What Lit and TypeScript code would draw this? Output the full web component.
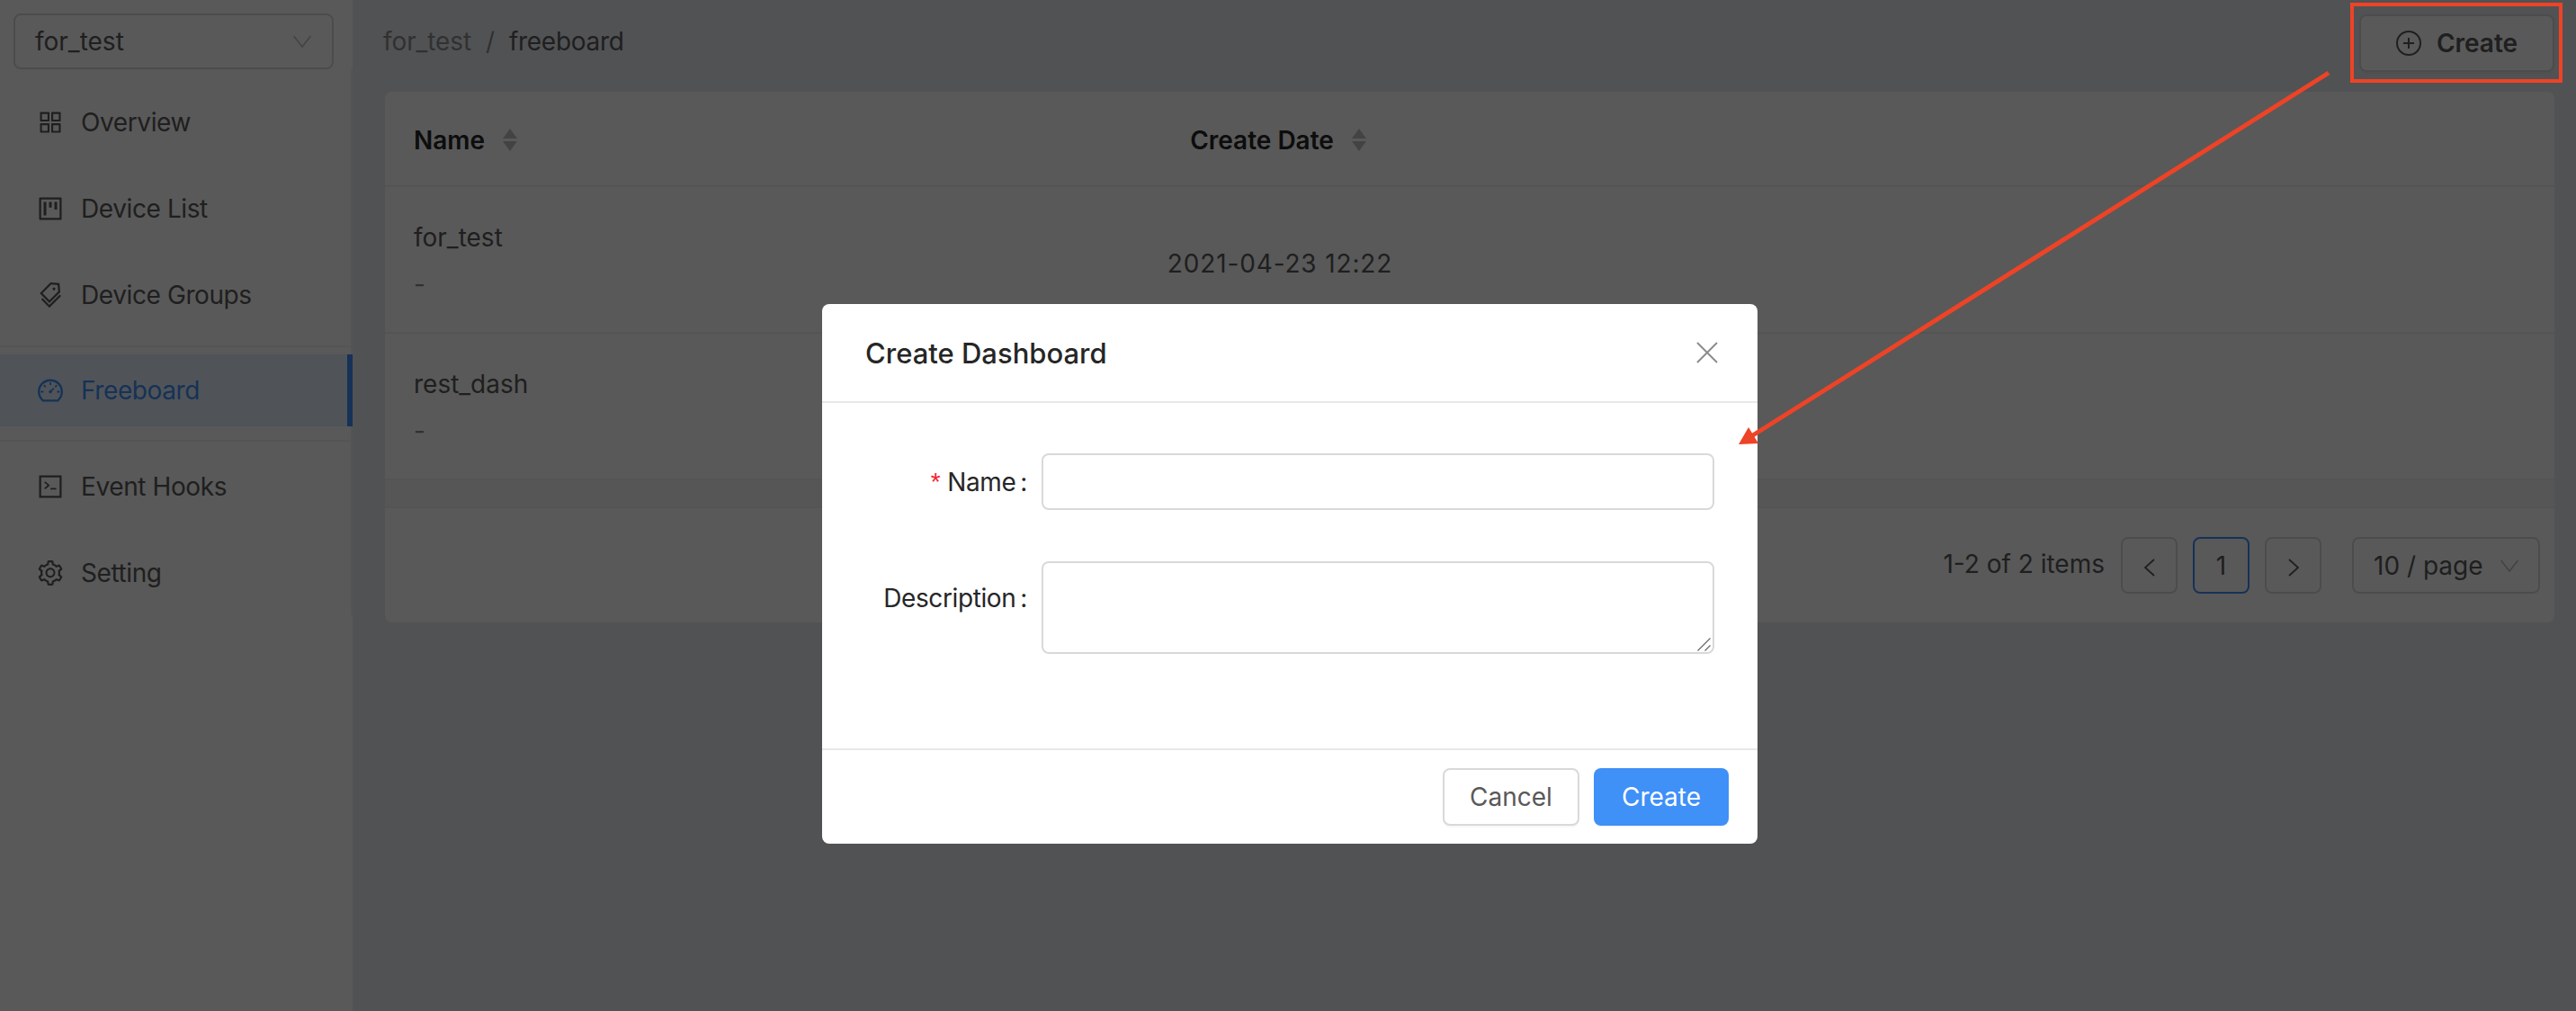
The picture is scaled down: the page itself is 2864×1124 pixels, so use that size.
import { LitElement, html, css, svg } from 'lit';
import { customElement } from 'lit/decorators.js';

const icon = (d: string) => html`<svg class="ico" viewBox="64 64 896 896" fill="currentColor"><path d=${d}></path></svg>`;

const APPSTORE = 'M464 144H160c-8.8 0-16 7.2-16 16v304c0 8.8 7.2 16 16 16h304c8.8 0 16-7.2 16-16V160c0-8.8-7.2-16-16-16zm-52 268H212V212h200v200zm452-268H560c-8.8 0-16 7.2-16 16v304c0 8.8 7.2 16 16 16h304c8.8 0 16-7.2 16-16V160c0-8.8-7.2-16-16-16zm-52 268H612V212h200v200zM464 544H160c-8.8 0-16 7.2-16 16v304c0 8.8 7.2 16 16 16h304c8.8 0 16-7.2 16-16V560c0-8.8-7.2-16-16-16zm-52 268H212V612h200v200zm452-268H560c-8.8 0-16 7.2-16 16v304c0 8.8 7.2 16 16 16h304c8.8 0 16-7.2 16-16V560c0-8.8-7.2-16-16-16zm-52 268H612V612h200v200z';
const PROJECT = 'M280 752h80c4.4 0 8-3.6 8-8V280c0-4.4-3.6-8-8-8h-80c-4.4 0-8 3.6-8 8v464c0 4.4 3.6 8 8 8zm192-280h80c4.4 0 8-3.6 8-8V280c0-4.4-3.6-8-8-8h-80c-4.4 0-8 3.6-8 8v184c0 4.4 3.6 8 8 8zm192 72h80c4.4 0 8-3.6 8-8V280c0-4.4-3.6-8-8-8h-80c-4.4 0-8 3.6-8 8v256c0 4.4 3.6 8 8 8zm216-432H144c-17.7 0-32 14.3-32 32v736c0 17.7 14.3 32 32 32h736c17.7 0 32-14.3 32-32V144c0-17.7-14.3-32-32-32zm-40 728H184V184h656v656z';
const TAGS = 'M483.2 790.3L861.4 412c1.7-1.7 2.5-4 2.3-6.3l-25.5-301.4c-.7-7.8-6.8-13.9-14.6-14.6L522.2 64.3c-2.3-.2-4.7.6-6.3 2.3L137.7 444.8a8.03 8.03 0 000 11.3l334.2 334.2c3.1 3.2 8.2 3.2 11.3 0zm62.6-651.7l224.6 19 19 224.6L477.5 694 233.9 450.5l311.9-311.9zm60.16 186.23a48 48 0 1067.88-67.89 48 48 0 10-67.88 67.89zM889.7 539.8l-39.6-39.5a8.03 8.03 0 00-11.3 0l-362 361.3-237.6-237a8.03 8.03 0 00-11.3 0l-39.6 39.5a8.03 8.03 0 000 11.3l243.2 242.8 39.6 39.5c3.1 3.1 8.2 3.1 11.3 0l407.3-406.6c3.1-3.1 3.1-8.2 0-11.3z';
const DASHBOARD = 'M924.8 385.6a446.7 446.7 0 00-96-142.4 446.7 446.7 0 00-142.4-96C631.1 123.8 572.5 112 512 112s-119.1 11.8-174.4 35.2a446.7 446.7 0 00-142.4 96 446.7 446.7 0 00-96 142.4C75.8 440.9 64 499.5 64 560c0 132.7 58.3 257.7 159.9 343.1l1.7 1.4c5.8 4.8 13.1 7.5 20.6 7.5h531.7c7.5 0 14.8-2.7 20.6-7.5l1.7-1.4C901.7 817.7 960 692.7 960 560c0-60.5-11.8-119.1-35.2-174.4zM761.4 836H262.6A371.12 371.12 0 01140 560c0-99.4 38.7-192.8 109-263 70.3-70.3 163.7-109 263-109 99.4 0 192.8 38.7 263 109 70.3 70.3 109 163.7 109 263 0 105.6-44.5 205.5-122.6 276zM623.5 421.5a8.03 8.03 0 00-11.3 0L527.7 506c-18.7-5-39.4-.2-54.1 14.5a55.95 55.95 0 000 79.2 55.95 55.95 0 0079.2 0 55.87 55.87 0 0014.5-54.1l84.5-84.5c3.1-3.1 3.1-8.2 0-11.3l-28.3-28.3zM490 320h44c4.4 0 8-3.6 8-8v-80c0-4.4-3.6-8-8-8h-44c-4.4 0-8 3.6-8 8v80c0 4.4 3.6 8 8 8zm260 218v44c0 4.4 3.6 8 8 8h80c4.4 0 8-3.6 8-8v-44c0-4.4-3.6-8-8-8h-80c-4.4 0-8 3.6-8 8zm12.7-197.2l-31.1-31.1a8.03 8.03 0 00-11.3 0l-56.6 56.6a8.03 8.03 0 000 11.3l31.1 31.1c3.1 3.1 8.2 3.1 11.3 0l56.6-56.6c3.1-3.1 3.1-8.2 0-11.3zm-458.6-31.1a8.03 8.03 0 00-11.3 0l-31.1 31.1a8.03 8.03 0 000 11.3l56.6 56.6c3.1 3.1 8.2 3.1 11.3 0l31.1-31.1c3.1-3.1 3.1-8.2 0-11.3l-56.6-56.6zM262 530h-80c-4.4 0-8 3.6-8 8v44c0 4.4 3.6 8 8 8h80c4.4 0 8-3.6 8-8v-44c0-4.4-3.6-8-8-8z';
const SETTING = 'M924.8 625.7l-65.5-56c3.1-19 4.7-38.4 4.7-57.8s-1.6-38.8-4.7-57.8l65.5-56a32.03 32.03 0 009.3-35.2l-.9-2.6a443.74 443.74 0 00-79.7-137.9l-1.8-2.1a32.12 32.12 0 00-35.1-9.5l-81.3 28.9c-30-24.6-63.5-44-99.7-57.6l-15.7-85a32.05 32.05 0 00-25.8-25.7l-2.7-.5c-52.1-9.4-106.9-9.4-159 0l-2.7.5a32.05 32.05 0 00-25.8 25.7l-15.8 85.4a351.86 351.86 0 00-99 57.4l-81.9-29.1a32 32 0 00-35.1 9.5l-1.8 2.1a446.02 446.02 0 00-79.7 137.9l-.9 2.6c-4.5 12.5-.8 26.5 9.3 35.2l66.3 56.6c-3.1 18.8-4.6 38-4.6 57.1 0 19.2 1.5 38.4 4.6 57.1L99 625.5a32.03 32.03 0 00-9.3 35.2l.9 2.6c18.1 50.4 44.9 96.9 79.7 137.9l1.8 2.1a32.12 32.12 0 0035.1 9.5l81.9-29.1c29.8 24.5 63.1 43.9 99 57.4l15.8 85.4a32.05 32.05 0 0025.8 25.7l2.7.5a449.4 449.4 0 00159 0l2.7-.5a32.05 32.05 0 0025.8-25.7l15.7-85a350 350 0 0099.7-57.6l81.3 28.9a32 32 0 0035.1-9.5l1.8-2.1c34.8-41.1 61.6-87.5 79.7-137.9l.9-2.6c4.5-12.3.8-26.3-9.3-35zM788.3 465.9c2.5 15.1 3.8 30.6 3.8 46.1s-1.3 31-3.8 46.1l-6.6 40.1 74.7 63.9a370.03 370.03 0 01-42.6 73.6L721 702.8l-31.4 25.8c-23.9 19.6-50.5 35-79.3 45.8l-38.1 14.3-17.9 97a377.5 377.5 0 01-85 0l-17.9-97.2-37.8-14.5c-28.5-10.8-55-26.2-78.7-45.7l-31.4-25.9-93.4 33.2c-17-22.9-31.2-47.6-42.6-73.6l75.5-64.5-6.5-40c-2.4-14.9-3.7-30.3-3.7-45.5 0-15.3 1.2-30.6 3.7-45.5l6.5-40-75.5-64.5c11.3-26.1 25.6-50.7 42.6-73.6l93.4 33.2 31.4-25.9c23.7-19.5 50.2-34.9 78.7-45.7l37.9-14.3 17.9-97.2c28.1-3.2 56.8-3.2 85 0l17.9 97 38.1 14.3c28.7 10.8 55.4 26.2 79.3 45.8l31.4 25.8 92.8-32.9c17 22.9 31.2 47.6 42.6 73.6L781.8 426l6.5 39.9zM512 326c-97.2 0-176 78.8-176 176s78.8 176 176 176 176-78.8 176-176-78.8-176-176-176zm79.2 255.2A111.6 111.6 0 01512 614c-29.9 0-58-11.7-79.2-32.8A111.6 111.6 0 01400 502c0-29.9 11.7-58 32.8-79.2C454 401.6 482.1 390 512 390c29.9 0 58 11.6 79.2 32.8A111.6 111.6 0 01624 502c0 29.9-11.7 58-32.8 79.2z';
const CODE = 'M112 112h800v800H112z M184 184v656h656V184z M290 360l44-34 148 126c8 7 8 19 0 26L334 604l-44-34 120-105z M516 558h206v56H516z';

const chevronDown = html`<svg class="chev" viewBox="0 0 20 14" fill="none" stroke="currentColor" stroke-width="1.6"><path d="M.6 1L10 13 19.4 1"></path></svg>`;
const sorter = html`<span class="sorter"><svg viewBox="0 0 16 25" fill="currentColor"><path d="M8 0l8 11H0z"></path><path d="M8 25l8-11H0z"></path></svg></span>`;

@customElement('app-root')
export class AppRoot extends LitElement {
  static styles = css`
    :host {
      display: block;
      position: relative;
      width: 2864px;
      height: 1124px;
      overflow: hidden;
      background: #e9ebef;
      font-family: Inter, 'Liberation Sans', sans-serif;
      font-size: 28px;
      color: #595959;
    }
    .layout {
      display: flex;
      height: 100%;
    }
    aside {
      width: 392px;
      flex: none;
      background: #fff;
      padding-top: 15px;
      box-sizing: border-box;
    }
    .ico {
      width: 28px;
      height: 28px;
      flex: none;
      display: block;
    }
    .chev {
      width: 20px;
      height: 14px;
      color: #bfbfbf;
      display: block;
    }
    .team {
      margin: 0 21px 0 15px;
      height: 62px;
      box-sizing: border-box;
      border: 2px solid #d9d9d9;
      border-radius: 8px;
      display: flex;
      align-items: center;
      justify-content: space-between;
      padding: 0 23px 0 22px;
    }
    .menu {
      border-right: 2px solid #f0f0f0;
      padding-top: 11px;
      height: 596px;
    }
    .item {
      height: 96px;
      display: flex;
      align-items: center;
      gap: 20px;
      padding-left: 42px;
      letter-spacing: -0.4px;
    }
    .sep {
      height: 2px;
      background: #f0f0f0;
    }
    .sep.before {
      margin: 8px 0;
    }
    .sep.after {
      margin: 15px 0 2px;
    }
    .item.active {
      height: 80px;
      background: #e6f1fd;
      color: #3f90f7;
      border-right: 6px solid #3f90f7;
      margin-right: -2px;
    }
    main {
      flex: 1;
      padding: 0 24px 0 36px;
      min-width: 0;
    }
    .topbar {
      height: 102px;
      display: flex;
      align-items: flex-start;
      justify-content: space-between;
    }
    .crumbs {
      display: flex;
      gap: 16px;
      margin: 27px 0 0 -2px;
      line-height: 38px;
      letter-spacing: -0.1px;
    }
    .crumbs .muted {
      color: #8c8c8c;
    }
    .crumbs .current {
      letter-spacing: -0.3px;
    }
    .btn-add {
      margin-top: 16px;
      width: 217px;
      height: 64px;
      box-sizing: border-box;
      border: 2px solid #d9d9d9;
      border-radius: 8px;
      background: #fff;
      display: flex;
      align-items: center;
      justify-content: center;
      gap: 17px;
      font-weight: 600;
      box-shadow: 0 2px 0 rgba(0, 0, 0, 0.02);
    }
    .card {
      background: #fff;
      border-radius: 8px;
      height: 590px;
      overflow: hidden;
    }
    .row {
      display: grid;
      grid-template-columns: 680px 626px 1fr;
      border-bottom: 2px solid #f0f0f0;
      box-sizing: border-box;
    }
    .row.head {
      height: 106px;
      align-items: center;
      font-weight: 600;
      color: #262626;
      padding-top: 3px;
    }
    .row.body {
      height: 163px;
      align-items: center;
    }
    .cell {
      padding-left: 32px;
    }
    .cell.name {
      padding-top: 3px;
    }
    .cell.date {
      padding: 9px 0 0 4px;
      text-align: center;
      letter-spacing: 0.85px;
    }
    .cell.head-name {
      display: flex;
      align-items: center;
      gap: 20px;
    }
    .cell.head-date {
      display: flex;
      align-items: center;
      justify-content: center;
      gap: 20px;
      padding: 0;
      letter-spacing: 0;
    }
    .sorter {
      color: #bfbfbf;
      display: block;
    }
    .sorter svg {
      width: 16px;
      height: 25px;
      display: block;
    }
    .sub {
      color: #8c8c8c;
      margin-top: 12px;
    }
    .line {
      line-height: 40px;
    }
    .band {
      height: 29px;
      background: #f7f7f7;
      border-bottom: 2px solid #f0f0f0;
    }
    .pager {
      display: flex;
      justify-content: flex-end;
      align-items: center;
      padding: 32px 16px 0 0;
      gap: 17px;
    }
    .pg {
      width: 63px;
      height: 63px;
      box-sizing: border-box;
      border: 2px solid #d9d9d9;
      border-radius: 8px;
      display: flex;
      align-items: center;
      justify-content: center;
    }
    .pg svg {
      width: 20px;
      height: 20px;
      display: block;
      margin-top: 4px;
    }
    .pg.on {
      border-color: #3f90f7;
    }
    .total {
      margin: -3px 1px 0 0;
    }
    .size {
      margin-left: 17px;
      width: 209px;
      height: 63px;
      box-sizing: border-box;
      border: 2px solid #d9d9d9;
      border-radius: 8px;
      display: flex;
      align-items: center;
      justify-content: space-between;
      padding: 0 22px;
    }
    .mask {
      position: absolute;
      inset: 0;
      background: rgba(0, 0, 0, 0.65);
      padding: 338px 0 0 914px;
      box-sizing: border-box;
    }
    .modal {
      width: 1040px;
      height: 600px;
      background: #fff;
      border-radius: 8px;
      display: flex;
      flex-direction: column;
      color: #262626;
    }
    .modal-head {
      height: 110px;
      box-sizing: border-box;
      border-bottom: 2px solid #e8e8e8;
      display: flex;
      align-items: center;
      justify-content: space-between;
      padding: 0 44px 0 48px;
      font-size: 31px;
      font-weight: 500;
    }
    .close {
      width: 24px;
      height: 24px;
      color: #8c8c8c;
      display: block;
    }
    .modal-body {
      flex: 1;
      display: grid;
      grid-template-columns: 228px 748px;
      column-gap: 16px;
      align-content: start;
      padding-top: 56px;
      row-gap: 57px;
    }
    .label {
      display: flex;
      justify-content: flex-end;
      align-items: center;
      height: 63px;
      gap: 8px;
      white-space: nowrap;
      letter-spacing: -0.4px;
    }
    .label.tall {
      padding-top: 9px;
    }
    .label .req {
      color: #f5222d;
      font-family: 'Liberation Sans', sans-serif;
    }
    .colon {
      margin-left: 5px;
    }
    .area {
      position: relative;
      display: block;
      width: 748px;
      height: 103px;
    }
    .grip {
      position: absolute;
      right: 4px;
      bottom: 3px;
      width: 15px;
      height: 15px;
      color: #666;
      display: block;
    }
    input,
    textarea {
      display: block;
      width: 748px;
      box-sizing: border-box;
      border: 2px solid #d9d9d9;
      border-radius: 8px;
      background: #fff;
      margin: 0;
      padding: 8px 22px;
      font: inherit;
      outline: none;
    }
    input {
      height: 63px;
    }
    textarea {
      height: 103px;
      resize: none;
    }
    .modal-foot {
      height: 106px;
      box-sizing: border-box;
      border-top: 2px solid #e8e8e8;
      display: flex;
      justify-content: flex-end;
      gap: 16px;
      padding: 20px 32px 0 0;
    }
    .mbtn {
      height: 64px;
      box-sizing: border-box;
      border-radius: 8px;
      display: flex;
      align-items: center;
      justify-content: center;
      box-shadow: 0 2px 0 rgba(0, 0, 0, 0.03);
    }
    .mbtn.ghost {
      width: 152px;
      border: 2px solid #d9d9d9;
      color: #595959;
      background: #fff;
    }
    .mbtn.primary {
      width: 150px;
      background: #3f90f7;
      color: #fff;
    }
    .marks {
      position: absolute;
      left: 0;
      top: 0;
      width: 2864px;
      height: 1124px;
      pointer-events: none;
    }
  `;

  renderRow(name: string, date: string) {
    return html`<div class="row body">
      <div class="cell name">
        <div class="line">${name}</div>
        <div class="line sub">-</div>
      </div>
      <div class="cell date">${date}</div>
    </div>`;
  }

  render() {
    return html`
      <div class="layout">
        <aside>
          <div class="team"><span>for_test</span>${chevronDown}</div>
          <div class="menu">
            <div class="item">${icon(APPSTORE)}Overview</div>
            <div class="item">${icon(PROJECT)}Device List</div>
            <div class="item">${icon(TAGS)}Device Groups</div>
            <div class="sep before"></div>
            <div class="item active">${icon(DASHBOARD)}Freeboard</div>
            <div class="sep after"></div>
            <div class="item">${icon(CODE)}Event Hooks</div>
            <div class="item">${icon(SETTING)}Setting</div>
          </div>
        </aside>
        <main>
          <div class="topbar">
            <div class="crumbs"><span class="muted">for_test</span><span class="muted">/</span><span class="current">freeboard</span></div>
            <div class="btn-add">
              <svg class="ico" viewBox="0 0 28 28" fill="none" stroke="currentColor" stroke-width="2"><circle cx="14" cy="14" r="13"></circle><path d="M14 8v12M8 14h12"></path></svg>
              Create
            </div>
          </div>
          <div class="card">
            <div class="row head">
              <div class="cell head-name">Name ${sorter}</div>
              <div class="cell date head-date">Create Date ${sorter}</div>
            </div>
            ${this.renderRow('for_test', '2021-04-23 12:22')}
            ${this.renderRow('rest_dash', '')}
            <div class="band"></div>
            <div class="pager">
              <span class="total">1-2 of 2 items</span>
              <div class="pg"><svg viewBox="0 0 20 20" fill="none" stroke="currentColor" stroke-width="1.8"><path d="M15 1L5 10l10 9"></path></svg></div>
              <div class="pg on">1</div>
              <div class="pg"><svg viewBox="0 0 20 20" fill="none" stroke="currentColor" stroke-width="1.8"><path d="M5 1l10 9-10 9"></path></svg></div>
              <div class="size"><span>10 / page</span>${chevronDown}</div>
            </div>
          </div>
        </main>
      </div>
      <div class="mask">
        <div class="modal">
          <div class="modal-head">
            <span>Create Dashboard</span>
            <svg class="close" viewBox="0 0 24 24" fill="none" stroke="currentColor" stroke-width="2"><path d="M1 1l22 22M23 1L1 23"></path></svg>
          </div>
          <div class="modal-body">
            <div class="label"><span class="req">*</span><span>Name<span class="colon">:</span></span></div>
            <input type="text" />
            <div class="label tall"><span>Description<span class="colon">:</span></span></div>
            <div class="area">
              <textarea></textarea>
              <svg class="grip" viewBox="0 0 15 15" fill="none" stroke="currentColor" stroke-width="1.2"><path d="M.5 14.5l14-14M8.5 14.5l6-6"></path></svg>
            </div>
          </div>
          <div class="modal-foot">
            <div class="mbtn ghost">Cancel</div>
            <div class="mbtn primary">Create</div>
          </div>
        </div>
      </div>
      <svg class="marks" viewBox="0 0 2864 1124">
        ${svg`<rect x="2615" y="5" width="232" height="85" fill="none" stroke="#ee4326" stroke-width="4"></rect>
        <path d="M2589 81L1944 487" fill="none" stroke="#ee4326" stroke-width="5"></path>
        <path d="M1933 494L1944 475L1955 493z" fill="#ee4326"></path>`}
      </svg>
    `;
  }
}
